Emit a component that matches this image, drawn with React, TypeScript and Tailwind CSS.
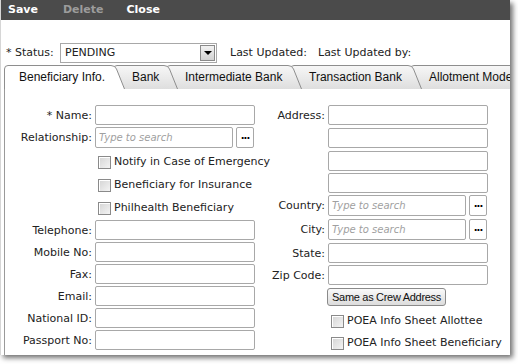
import React from 'react';

const label = "text-[11px] text-[#222] text-right whitespace-nowrap";
const box = "h-[20px] border border-[#a8a8a8] rounded-[2px] bg-white";

function Tab({ text, w, cls, pl, active, z }: { text: string; w: number; cls: string; pl: string; active?: boolean; z: string }) {
    const H = 23;
    const d = `M0.5,${H + 1} L0.5,4 Q0.5,0.5 4,0.5 L${w - 14},0.5 Q${w - 10},0.5 ${w - 8.5},4 L${w - 0.5},${H + 1}`;
    const id = `g-${text.replace(/[^a-z]/gi, '')}`;
    return (
        <div className={`relative h-[23px] shrink-0 ${cls} ${z}`}>
            <svg className="absolute left-0 top-0 overflow-visible" width={w} height={H + 1}>
                <defs>
                    <linearGradient id={id} x1="0" y1="0" x2="0" y2="1">
                        <stop offset="0" stopColor={active ? '#ffffff' : '#f7f7f7'} />
                        <stop offset="1" stopColor={active ? '#ffffff' : '#dedede'} />
                    </linearGradient>
                </defs>
                <path d={d} fill={`url(#${id})`} stroke="#8e8e8e" strokeWidth="1" />
            </svg>
            <div className={`relative ${pl} leading-[24px] text-[12px] text-[#111] whitespace-nowrap [font-family:'Liberation_Sans',sans-serif]`}>
                {text}
            </div>
        </div>
    );
}

function Check({ text }: { text: string }) {
    return (
        <div className="flex items-center whitespace-nowrap">
            <div className="w-[13px] h-[13px] shrink-0 border border-[#8a8a8a] bg-gradient-to-br from-[#d4d4d4] to-[#f4f4f4] shadow-[inset_1px_1px_0_#fff]" />
            <span className="ml-[3px] text-[11px] text-[#222]">{text}</span>
        </div>
    );
}

function Dots() {
    return (
        <div className="w-[18px] h-[21px] border border-[#a8a8a8] rounded-[2px] bg-white flex items-center justify-center">
            <span className="text-[10px] font-bold leading-none tracking-[-1px] -mt-[4px]">...</span>
        </div>
    );
}

function Search({ w }: { w: string }) {
    return (
        <div className={`${w} h-[21px] border border-[#a8a8a8] rounded-[2px] bg-white flex items-center pl-[3px]`}>
            <span className="text-[10px] italic text-[#a0a0a0] whitespace-nowrap">Type to search</span>
        </div>
    );
}

export default function App() {
    return (
        <div className="w-[518px] h-[364px] bg-white overflow-hidden [font-family:'DejaVu_Sans',sans-serif]">
            <div className="w-[510px] h-[355px] bg-white flex flex-col overflow-hidden border-l border-[#d6d6d6] shadow-[3px_3px_5px_rgba(0,0,0,0.55)]">
                {/* Toolbar */}
                <div className="h-[20px] bg-[#4b4b4b] flex items-center pl-[7px] text-[11px] font-bold text-white shrink-0">
                    <span>Save</span>
                    <span className="ml-[25px] text-[#9c9c9c]">Delete</span>
                    <span className="ml-[23px]">Close</span>
                </div>

                {/* Status */}
                <div className="mt-[23px] h-[20px] flex items-center pl-[5px] text-[11px] text-[#222] shrink-0">
                    <span className="w-[54px]">* Status:</span>
                    <div className="w-[157px] h-[20px] border border-[#a8a8a8] bg-white flex items-center justify-between pl-[4px] pr-[1px]">
                        <span>PENDING</span>
                        <div className="w-[15px] h-[16px] border border-[#8a8a8a] bg-gradient-to-b from-[#f2f2f2] to-[#d2d2d2] flex items-center justify-center">
                            <div className="w-0 h-0 border-l-[4px] border-r-[4px] border-t-[4px] border-l-transparent border-r-transparent border-t-black" />
                        </div>
                    </div>
                    <span className="ml-[13px] w-[88px]">Last Updated:</span>
                    <span>Last Updated by:</span>
                </div>

                {/* Tabs */}
                <div className="mt-[2px] h-[23px] flex pl-[3px] relative z-10 shrink-0">
                    <Tab text="Beneficiary Info." w={121} cls="w-[121px]" pl="pl-[15px]" active z="z-[6]" />
                    <Tab text="Bank" w={65} cls="w-[65px] -ml-[12px]" pl="pl-[19px]" z="z-[5]" />
                    <Tab text="Intermediate Bank" w={136} cls="w-[136px] -ml-[12px]" pl="pl-[19px]" z="z-[4]" />
                    <Tab text="Transaction Bank" w={132} cls="w-[132px] -ml-[12px]" pl="pl-[19px]" z="z-[3]" />
                    <Tab text="Allotment Mode" w={130} cls="w-[130px] -ml-[12px]" pl="pl-[19px]" z="z-[2]" />
                </div>

                {/* Panel */}
                <div className="ml-[3px] flex-1 border-t border-l border-[#9a9a9a] pt-[16px] flex">
                    {/* Left column */}
                    <div className="w-[250px] shrink-0 flex flex-col">
                        <div className="h-[22px] flex">
                            <div className={`w-[87px] ${label} pt-[3px]`}>* Name:</div>
                            <div className={`ml-[3px] w-[160px] ${box}`} />
                        </div>
                        <div className="h-[24px] flex">
                            <div className={`w-[87px] ${label} pt-[3px]`}>Relationship:</div>
                            <div className="ml-[3px] flex gap-[3px]">
                                <Search w="w-[138px]" />
                                <Dots />
                            </div>
                        </div>
                        <div className="h-[23px] flex items-center pl-[93px]"><Check text="Notify in Case of Emergency" /></div>
                        <div className="h-[23px] flex items-center pl-[93px]"><Check text="Beneficiary for Insurance" /></div>
                        <div className="h-[23px] flex items-center pl-[93px]"><Check text="Philhealth Beneficiary" /></div>
                        {['Telephone:', 'Mobile No:', 'Fax:', 'Email:', 'National ID:', 'Passport No:'].map((t) => (
                            <div key={t} className="h-[22px] flex">
                                <div className={`w-[87px] ${label} pt-[3px]`}>{t}</div>
                                <div className={`ml-[3px] w-[160px] ${box}`} />
                            </div>
                        ))}
                    </div>

                    {/* Right column */}
                    <div className="w-[250px] shrink-0 flex flex-col">
                        <div className="h-[23px] flex">
                            <div className={`w-[70px] ${label} pt-[3px]`}>Address:</div>
                            <div className={`ml-[3px] w-[160px] ${box}`} />
                        </div>
                        <div className="h-[23px] flex pl-[73px]"><div className={`w-[160px] ${box}`} /></div>
                        <div className="h-[22px] flex pl-[73px]"><div className={`w-[160px] ${box}`} /></div>
                        <div className="h-[22px] flex pl-[73px]"><div className={`w-[160px] ${box}`} /></div>
                        <div className="h-[24px] flex">
                            <div className={`w-[70px] ${label} pt-[3px]`}>Country:</div>
                            <div className="ml-[3px] flex gap-[3px]">
                                <Search w="w-[138px]" />
                                <Dots />
                            </div>
                        </div>
                        <div className="h-[24px] flex">
                            <div className={`w-[70px] ${label} pt-[3px]`}>City:</div>
                            <div className="ml-[3px] flex gap-[3px]">
                                <Search w="w-[138px]" />
                                <Dots />
                            </div>
                        </div>
                        <div className="h-[22px] flex">
                            <div className={`w-[70px] ${label} pt-[3px]`}>State:</div>
                            <div className={`ml-[3px] w-[160px] ${box}`} />
                        </div>
                        <div className="h-[22px] flex">
                            <div className={`w-[70px] ${label} pt-[3px]`}>Zip Code:</div>
                            <div className={`ml-[3px] w-[160px] ${box}`} />
                        </div>
                        <div className="h-[23px] flex pl-[72px] pt-[1px]">
                            <button className="w-[119px] h-[18px] border border-[#8a8a8a] rounded-[3px] bg-gradient-to-b from-[#fafafa] to-[#dcdcdc] text-[11px] tracking-[-0.3px] text-[#111] leading-none [font-family:'Liberation_Sans',sans-serif]">
                                Same as Crew Address
                            </button>
                        </div>
                        <div className="h-[22px] flex items-center pl-[76px]"><Check text="POEA Info Sheet Allottee" /></div>
                        <div className="h-[22px] flex items-center pl-[76px]"><Check text="POEA Info Sheet Beneficiary" /></div>
                    </div>
                </div>
            </div>
        </div>
    );
}
